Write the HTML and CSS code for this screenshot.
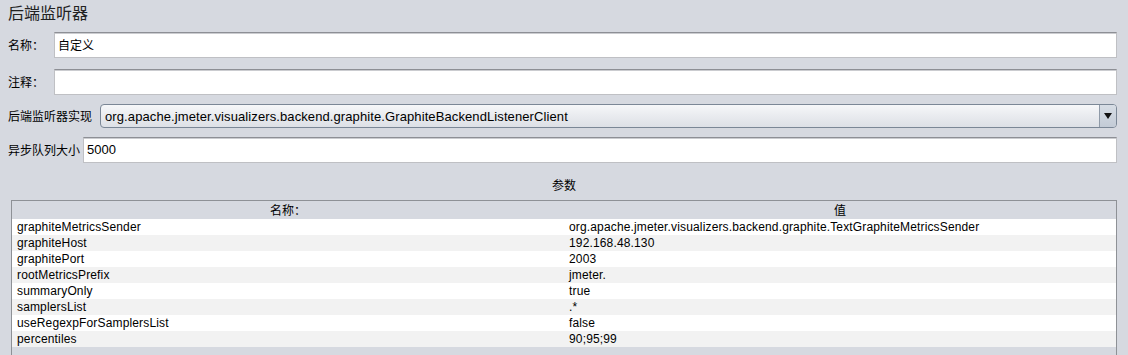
FILE: index.html
```html
<!DOCTYPE html>
<html lang="zh">
<head>
<meta charset="utf-8">
<title>后端监听器</title>
<link rel="stylesheet" href="styles.css">
</head>
<body>
<div class="panel">
  <div class="title">后端监听器</div>
  <div class="form">
    <div class="row r-name">
      <span class="lbl">名称：</span>
      <div class="field">自定义</div>
    </div>
    <div class="row r-comment">
      <span class="lbl">注释：</span>
      <div class="field"></div>
    </div>
    <div class="row r-impl">
      <span class="lbl">后端监听器实现</span>
      <div class="combo">
        <span class="combo-text">org.apache.jmeter.visualizers.backend.graphite.GraphiteBackendListenerClient</span>
        <span class="combo-btn"><span class="arrow"></span></span>
      </div>
    </div>
    <div class="row r-queue">
      <span class="lbl">异步队列大小</span>
      <div class="field latin">5000</div>
    </div>
    <div class="section">参数</div>
    <div class="table">
      <div class="thead">
        <div class="th">名称：</div>
        <div class="th">值</div>
      </div>
      <div class="tr"><div class="td">graphiteMetricsSender</div><div class="td">org.apache.jmeter.visualizers.backend.graphite.TextGraphiteMetricsSender</div></div>
      <div class="tr"><div class="td">graphiteHost</div><div class="td">192.168.48.130</div></div>
      <div class="tr"><div class="td">graphitePort</div><div class="td">2003</div></div>
      <div class="tr"><div class="td">rootMetricsPrefix</div><div class="td">jmeter.</div></div>
      <div class="tr"><div class="td">summaryOnly</div><div class="td">true</div></div>
      <div class="tr"><div class="td">samplersList</div><div class="td">.*</div></div>
      <div class="tr"><div class="td">useRegexpForSamplersList</div><div class="td">false</div></div>
      <div class="tr"><div class="td">percentiles</div><div class="td">90;95;99</div></div>
    </div>
  </div>
</div>
</body>
</html>
```
FILE: styles.css
```css
html, body {
  margin: 0;
  padding: 0;
  height: 355px;
  overflow: hidden;
}
body {
  background: #d6d9e0;
  font-family: "Noto Sans CJK SC", "Liberation Sans", sans-serif;
  font-size: 12px;
  color: #000;
}
.panel {
  display: flex;
  flex-direction: column;
}
.title {
  padding: 2px 8px 0;
  height: 20px;
  line-height: 20px;
  font-size: 16px;
  color: #222;
}
.form {
  display: flex;
  flex-direction: column;
  padding: 0 11px 0 8px;
}
.row {
  display: flex;
  align-items: center;
}
.r-name { margin-top: 10px; height: 26px; }
.r-comment { margin-top: 11px; height: 26px; }
.r-impl { margin-top: 9px; height: 24px; }
.r-queue { margin-top: 9px; height: 26px; }
.lbl {
  flex: none;
  line-height: 16px;
}
.r-name .lbl, .r-comment .lbl { width: 46px; }
.r-impl .lbl { width: 92px; }
.r-queue .lbl { width: 75px; }
.field {
  flex: 1;
  height: 26px;
  box-sizing: border-box;
  background: #fff;
  border: 1px solid #bfc0c4;
  border-top-color: #8d8f95;
  box-shadow: inset 0 1px 0 #cbccd0;
  padding: 0 3px;
  line-height: 24px;
}
.field.latin {
  font-family: "Liberation Sans", sans-serif;
  font-size: 13px;
}
.combo {
  flex: 1;
  height: 24px;
  box-sizing: border-box;
  border: 1px solid #7b8796;
  border-radius: 4px;
  background: linear-gradient(#f6f7f9, #e9ebef 50%, #dde0e6);
  display: flex;
  align-items: center;
  overflow: hidden;
}
.combo-text {
  flex: 1;
  padding-left: 4px;
  font-family: "Liberation Sans", sans-serif;
  font-size: 13px;
  letter-spacing: 0.1px;
  white-space: nowrap;
}
.combo-btn {
  flex: none;
  width: 16px;
  height: 100%;
  border-left: 1px solid #8f9aa8;
  background: linear-gradient(#d7dde5, #c3cbd6);
  display: flex;
  align-items: center;
  justify-content: center;
}
.arrow {
  width: 0;
  height: 0;
  border-left: 4px solid transparent;
  border-right: 4px solid transparent;
  border-top: 6px solid #111;
}
.section {
  margin-top: 14px;
  margin-bottom: 7px;
  line-height: 16px;
  text-align: center;
  padding-left: 3px;
}
.table {
  margin-left: 3px;
  height: 170px;
  border: 1px solid #8e9196;
  border-bottom: none;
  font-family: "Liberation Sans", sans-serif;
}
.thead {
  display: grid;
  grid-template-columns: 552px 1fr;
  height: 18px;
  line-height: 18px;
}
.th {
  text-align: center;
  font-family: "Noto Sans CJK SC", sans-serif;
}
.tr {
  display: grid;
  grid-template-columns: 552px 1fr;
  height: 16px;
  line-height: 16px;
  background: #fff;
  letter-spacing: 0.15px;
}
.tr:nth-child(odd) {
  background: #f2f2f2;
}
.td {
  padding-left: 5px;
  white-space: nowrap;
  overflow: hidden;
}
```
